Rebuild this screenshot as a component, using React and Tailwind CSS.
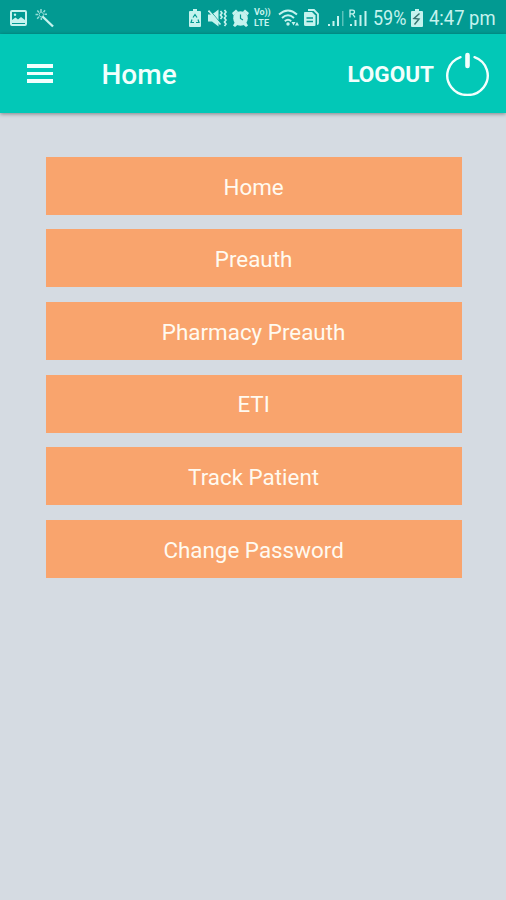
import React from "react";

const menuItems = [
  { id: "home", label: "Home" },
  { id: "preauth", label: "Preauth" },
  { id: "pharmacy", label: "Pharmacy Preauth" },
  { id: "eti", label: "ETI" },
  { id: "track", label: "Track Patient" },
  { id: "password", label: "Change Password" },
];

const StatusBar = () => (
  <div className="flex h-[34px] items-center bg-[#029a92] pl-2.5 pr-[11px] pt-px text-[#c5f3ee]">
    {/* Notifications */}
    <svg width="17" height="16" viewBox="0 0 17 16" fill="none">
      <rect x="1" y="1" width="15" height="14" rx="1" stroke="currentColor" strokeWidth="2" />
      <path d="M2 13V10l3.500-2.500 2.500 2 3-2.500 4 3V13Z" fill="currentColor" />
      <circle cx="5" cy="4.800" r="1.200" fill="currentColor" />
    </svg>
    <svg className="ml-2" width="19" height="20" viewBox="0 0 19 20" fill="none" stroke="currentColor">
      <path d="M7.500 8.500 18 18.500" strokeWidth="2.400" />
      <path d="M6 1v3M2.300 2.500l1.800 2M.5 6.500h2.600M2.200 10.800l1.800-2M6.300 12V9.500M10 2.300 8.500 4.200M12 6.200H9.500" strokeWidth="1.500" opacity=".75" />
      <circle cx="6.300" cy="6.600" r="2.200" strokeWidth="1" opacity=".7" />
    </svg>

    {/* System icons */}
    <div className="ml-auto flex items-center">
      <svg width="12" height="18" viewBox="0 0 12 18">
        <path d="M4 0h4v2h3q1 0 1 1v14q0 1-1 1H1q-1 0-1-1V3q0-1 1-1h3Z" fill="currentColor" />
        <path d="M4 8.500 6 5.500l2 3M9 10.500l1 3H7M5 13.500H2l1-3" fill="none" stroke="#029a92" strokeWidth="1.200" />
      </svg>
      <svg className="ml-[7px]" width="19" height="18" viewBox="0 0 19 18">
        <path d="M0 5.500h4l6.500-5v17l-6.500-5H0Z" fill="currentColor" />
        <path d="m1.500 1 12 14" stroke="#029a92" strokeWidth="1" />
        <path d="m.5 1.500 12 14" stroke="currentColor" strokeWidth="1.600" />
        <path d="m12.500 2 1.500 2-1.500 2L14 8l-1.500 2M16.500 1l1.500 2-1.500 2L18 7l-1.500 2 1.500 2-1.500 2 1.500 2-1.500 2" fill="none" stroke="currentColor" strokeWidth="1.700" />
      </svg>
      <svg className="ml-[5px]" width="17" height="18" viewBox="0 0 17 18">
        <circle cx="8.500" cy="9.500" r="7.300" fill="currentColor" />
        <path d="M0 4 4 .5 6 2.500 1.500 6.500ZM17 4 13 .5l-2 2 4.500 4ZM3 13l3 2.500L3 18l-2-1.500ZM14 13l-3 2.500 3 2.500 2-1.500Z" fill="currentColor" />
        <path d="M8.500 5.500V9.500l2.500 1.500" fill="none" stroke="#029a92" strokeWidth="1.200" />
      </svg>
      <div className="ml-[5px] flex w-[18px] flex-col text-[9px] font-bold leading-[11px]">
        <span className="tracking-[-0.1px]">Vo))</span>
        <span className="tracking-[0.3px]">LTE</span>
      </div>
      <svg className="ml-[6px]" width="22" height="18" viewBox="0 0 22 18" fill="none" stroke="currentColor">
        <path d="M1 5.500q9-8 18 0M4 9q6-5.500 12 0M6.800 12.200q3.200-3 6.400 0" strokeWidth="1.900" />
        <circle cx="10" cy="15" r="1.700" fill="currentColor" stroke="none" />
        <path d="M13.500 13h4L15.500 16.500ZM17 16.500h4l-2-3.500Z" fill="currentColor" stroke="none" />
      </svg>
      <svg className="ml-[3px]" width="16" height="18" viewBox="0 0 16 18" fill="none">
        <path d="M5 1h6l4 4v9q0 1-1 1" stroke="currentColor" strokeWidth="1.800" />
        <path d="M1.500 3H9l3.500 3.500V16q0 1-1 1h-9q-1.500 0-1.500-1.500V4.500Q1 3 1.500 3Z" fill="currentColor" />
        <path d="M3.500 9H10M3.500 12.500H10" stroke="#029a92" strokeWidth="1.400" />
      </svg>
      <svg className="ml-[9px]" width="16" height="18" viewBox="0 0 16 18" fill="currentColor">
        <path d="M0 15h2v2H0ZM4.500 12h2v5h-2ZM9 7h2v10H9Z" />
        <path d="M14 2h1.500v15H14Z" opacity=".45" />
      </svg>
      <svg className="ml-[5px]" width="18" height="18" viewBox="0 0 18 18" fill="currentColor">
        <path d="M1 15h2v2H1ZM5.500 11h2v6h-2ZM10.500 6h2v11h-2ZM15.500 2h2v15h-2Z" />
        <path d="M1 8.500V1.200h2.500q2 0 2 1.800t-2 1.800H1M3.500 4.800l2.500 3.500" fill="none" stroke="currentColor" strokeWidth="1.300" />
      </svg>
      <div className="ml-[6px] w-[33px] whitespace-nowrap text-[20px] leading-none">
        <span className="inline-block origin-left scale-x-[0.9]">59%</span>
      </div>
      <svg className="ml-[5px]" width="12" height="18" viewBox="0 0 12 18">
        <path d="M4 0h4v2h3q1 0 1 1v14q0 1-1 1H1q-1 0-1-1V3q0-1 1-1h3Z" fill="currentColor" />
        <path d="M8.500 4.500 3 9.500l5 .5-4.500 5.500" fill="none" stroke="#35746f" strokeWidth="1.400" />
      </svg>
      <div className="ml-[6px] w-[66px] whitespace-nowrap text-[20px] leading-none">
        <span className="inline-block origin-left scale-x-[0.92]">4:47 pm</span>
      </div>
    </div>
  </div>
);

const AppBar = () => (
  <header className="relative flex h-[79px] items-center bg-[#02c8b7] pl-[27px] pr-[17px] text-[#f2fffd] shadow-[0_1px_4px_rgba(0,0,0,0.4)]">
    <button aria-label="Open menu" className="flex flex-col gap-1">
      <span className="h-[3.500px] w-[26px] bg-current" />
      <span className="h-[3.500px] w-[26px] bg-current" />
      <span className="h-[3.500px] w-[26px] bg-current" />
    </button>
    <h1 className="ml-[48.500px] pt-0.5 text-[28px] font-medium leading-none">Home</h1>
    <button className="ml-auto flex items-center text-[22.500px] font-bold leading-none">
      <span className="pt-0.5">LOGOUT</span>
      <svg className="ml-3" width="43" height="44" viewBox="0 0 43 44" fill="none" stroke="currentColor" strokeLinecap="round">
        <path d="M14.500 5.200a20.200 19.500 0 1 0 14 0" strokeWidth="2.400" />
        <path d="M21.500 3v11" strokeWidth="4.600" />
      </svg>
    </button>
  </header>
);

const App = () => (
  <div className="flex min-h-screen flex-col bg-[#d5dbe2] font-['Roboto',sans-serif]">
    <StatusBar />
    <AppBar />
    <main className="flex flex-col gap-[14.600px] pl-[45.600px] pr-[44.400px] pt-[43.900px]">
      {menuItems.map((item) => (
        <button
          key={item.id}
          className="flex h-[58px] items-center justify-center bg-[#f9a46d] pt-0.5 text-[22.400px] leading-none text-[#fffaf0]"
        >
          {item.label}
        </button>
      ))}
    </main>
  </div>
);

export default App;
